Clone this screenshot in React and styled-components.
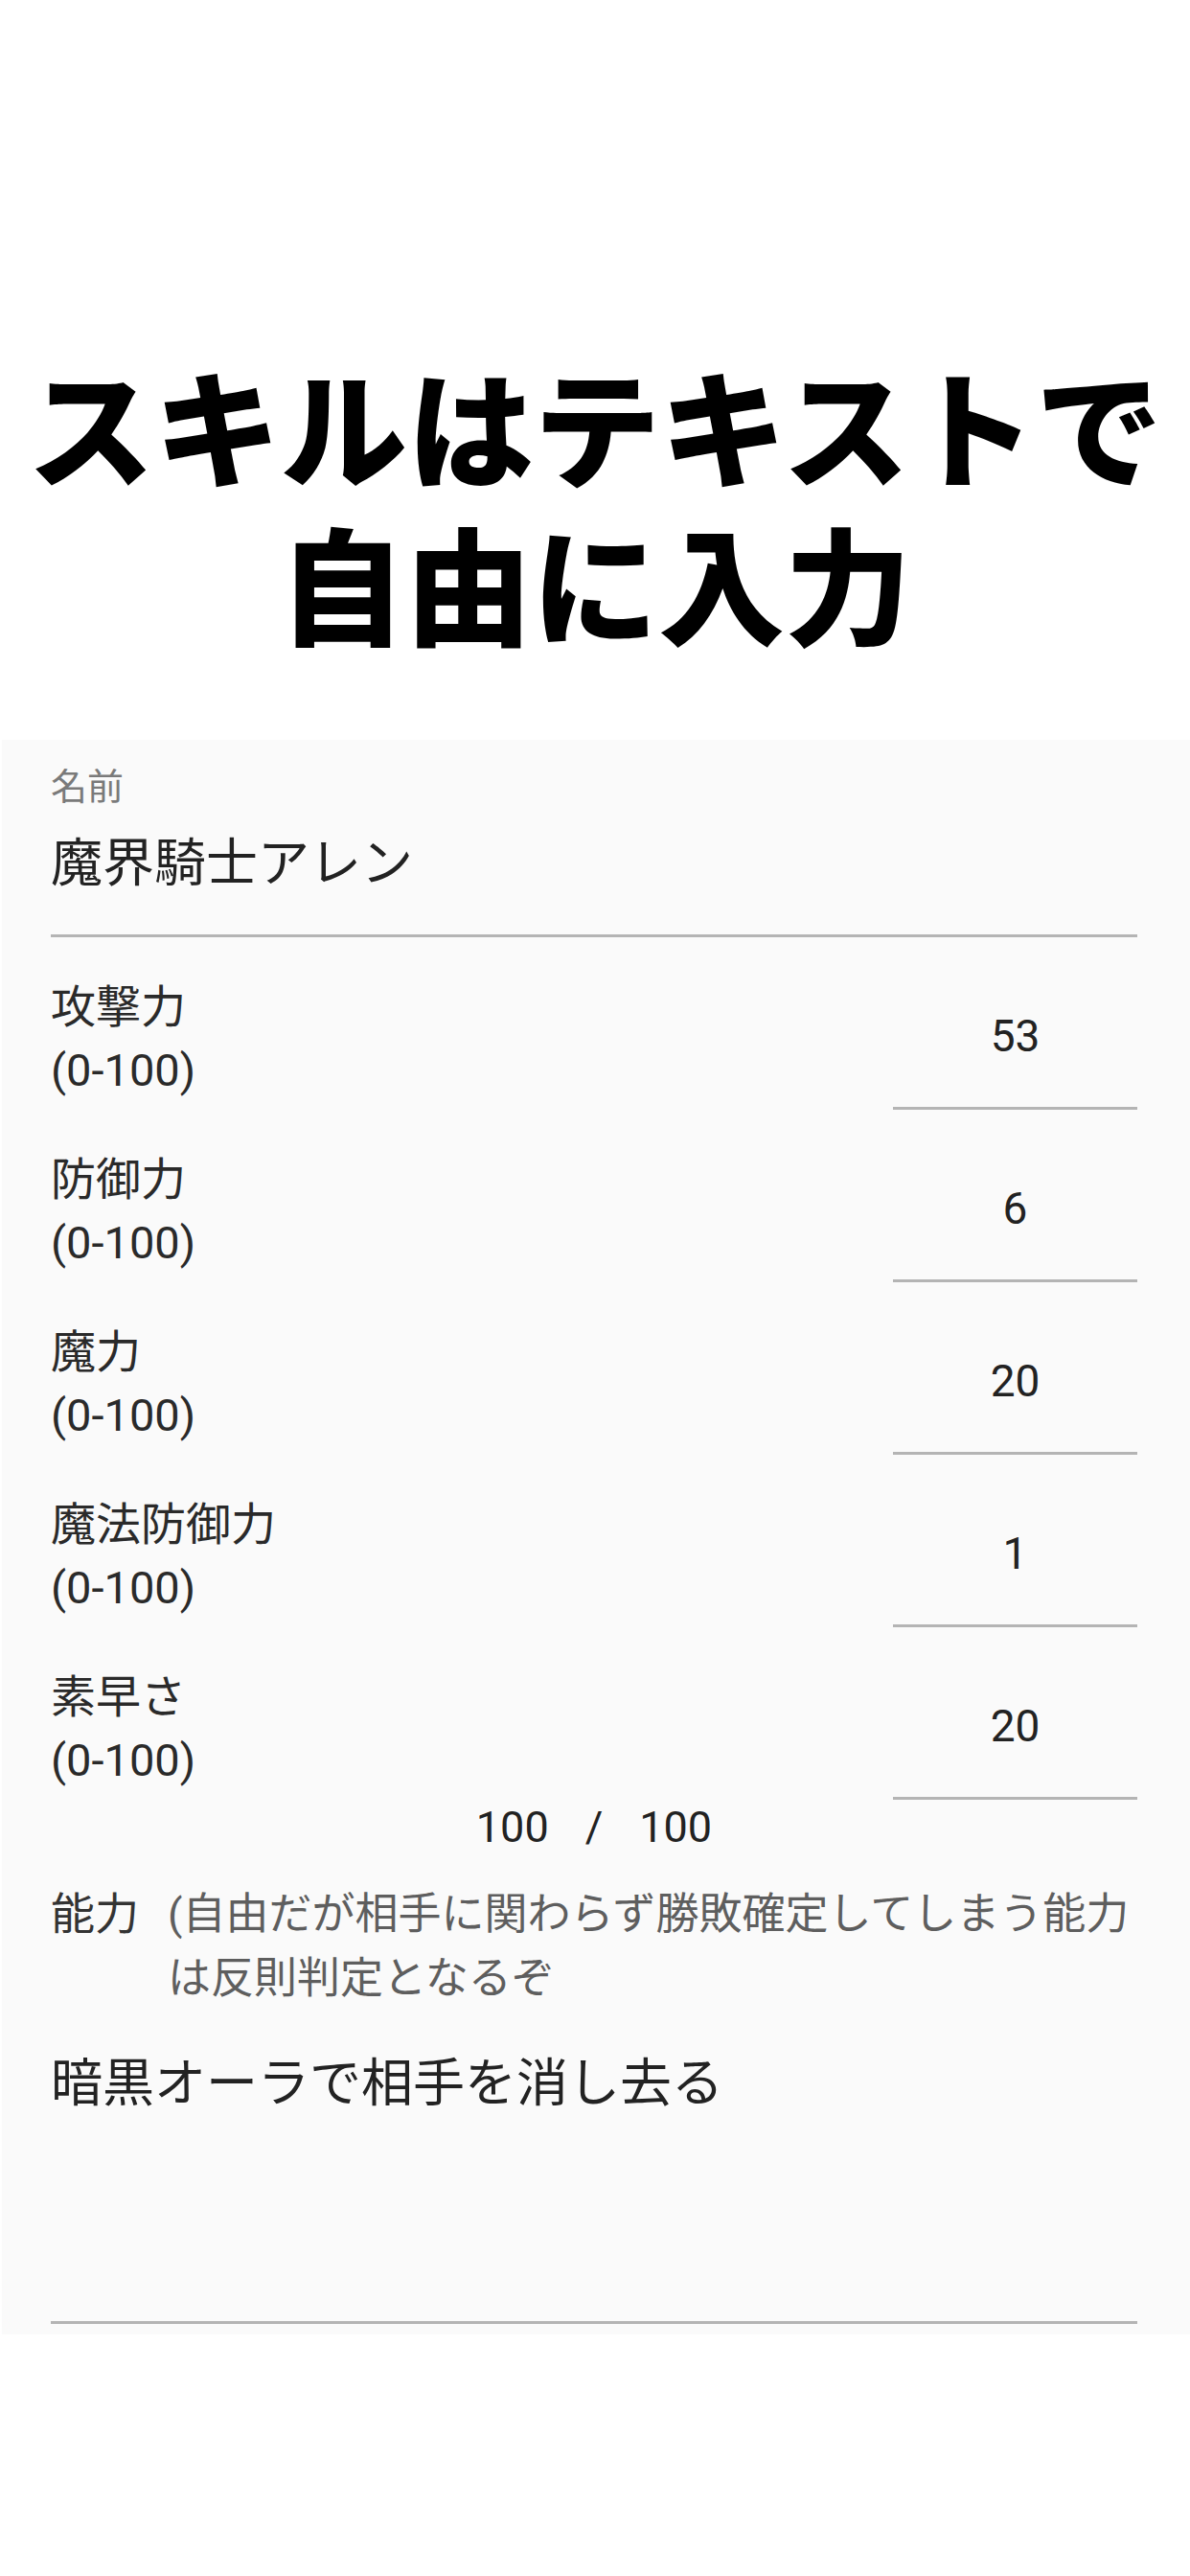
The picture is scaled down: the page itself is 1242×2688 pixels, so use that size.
import React from 'react';
import styled, { createGlobalStyle } from 'styled-components';

const GlobalStyle = createGlobalStyle`
  html, body {
    margin: 0;
    padding: 0;
    background: #ffffff;
  }
  body {
    font-family: Roboto, "Noto Sans CJK JP", sans-serif;
  }
`;

const stats = [
  { name: '攻撃力', value: 53 },
  { name: '防御力', value: 6 },
  { name: '魔力', value: 20 },
  { name: '魔法防御力', value: 1 },
  { name: '素早さ', value: 20 },
];

function App() {
  const total = stats.reduce((sum, s) => sum + s.value, 0);

  return (
    <Page>
      <GlobalStyle />
      <Headline>
        <HeadlineLine>スキルはテキストで</HeadlineLine>
        <HeadlineLine>自由に入力</HeadlineLine>
      </Headline>

      <Panel>
        <NameField>
          <FieldLabel>名前</FieldLabel>
          <FieldValue>魔界騎士アレン</FieldValue>
        </NameField>

        {stats.map((s) => (
          <StatRow key={s.name}>
            <StatLabel>
              {s.name}
              <br />
              (0-100)
            </StatLabel>
            <StatInput>
              <StatValue>{s.value}</StatValue>
            </StatInput>
          </StatRow>
        ))}

        <Total>
          <span>{total}</span>
          <span>/</span>
          <span>100</span>
        </Total>

        <AbilityRow>
          <AbilityLabel>能力</AbilityLabel>
          <AbilityHint>(自由だが相手に関わらず勝敗確定してしまう能力は反則判定となるぞ</AbilityHint>
        </AbilityRow>

        <SkillArea>暗黒オーラで相手を消し去る</SkillArea>
      </Panel>
    </Page>
  );
}

const Page = styled.div`
  width: 1242px;
  min-height: 2688px;
  background: #ffffff;
  overflow: hidden;
`;

const Headline = styled.h1`
  margin: 0;
  padding-top: 372px;
  margin-bottom: 72px;
  font-family: "Liberation Sans", "Noto Sans CJK JP", sans-serif;
  font-weight: 900;
  font-size: 132px;
  line-height: 164px;
  color: #000000;
  text-align: center;
`;

const HeadlineLine = styled.div`
  white-space: nowrap;
`;

const Panel = styled.div`
  margin-left: 2px;
  padding: 26px 55px 11px 51px;
  background: #fafafa;
  color: #222222;
`;

const NameField = styled.div`
  padding-bottom: 40px;
  border-bottom: 3px solid #b4b4b4;
`;

const FieldLabel = styled.div`
  font-size: 38px;
  line-height: 46px;
  color: #7a7a7a;
`;

const FieldValue = styled.div`
  margin-top: 25px;
  font-size: 54px;
  line-height: 66px;
  color: #222222;
`;

const StatRow = styled.div`
  display: flex;
  justify-content: space-between;
  padding-top: 40px;
`;

const StatLabel = styled.div`
  font-size: 47px;
  line-height: 66px;
  padding-bottom: 8px;
  color: #2a2a2a;
`;

const StatInput = styled.div`
  width: 255px;
  display: flex;
  align-items: center;
  justify-content: center;
  padding-bottom: 12px;
  border-bottom: 3px solid #b4b4b4;
  box-sizing: border-box;
`;

const StatValue = styled.span`
  font-size: 46px;
  line-height: 54px;
  color: #222222;
`;

const Total = styled.div`
  margin-top: 2px;
  display: flex;
  justify-content: center;
  gap: 38px;
  font-size: 45px;
  line-height: 54px;
  color: #222222;
`;

const AbilityRow = styled.div`
  display: flex;
  margin-top: 30px;
`;

const AbilityLabel = styled.div`
  flex: none;
  font-size: 46px;
  line-height: 67px;
  color: #333333;
`;

const AbilityHint = styled.div`
  flex: 1;
  margin-left: 30px;
  font-size: 45px;
  line-height: 67px;
  color: #5e5e5e;
`;

const SkillArea = styled.div`
  margin-top: 44px;
  min-height: 264px;
  padding-bottom: 16px;
  font-size: 54px;
  line-height: 66px;
  color: #222222;
  border-bottom: 3px solid #b4b4b4;
`;

export default App;
